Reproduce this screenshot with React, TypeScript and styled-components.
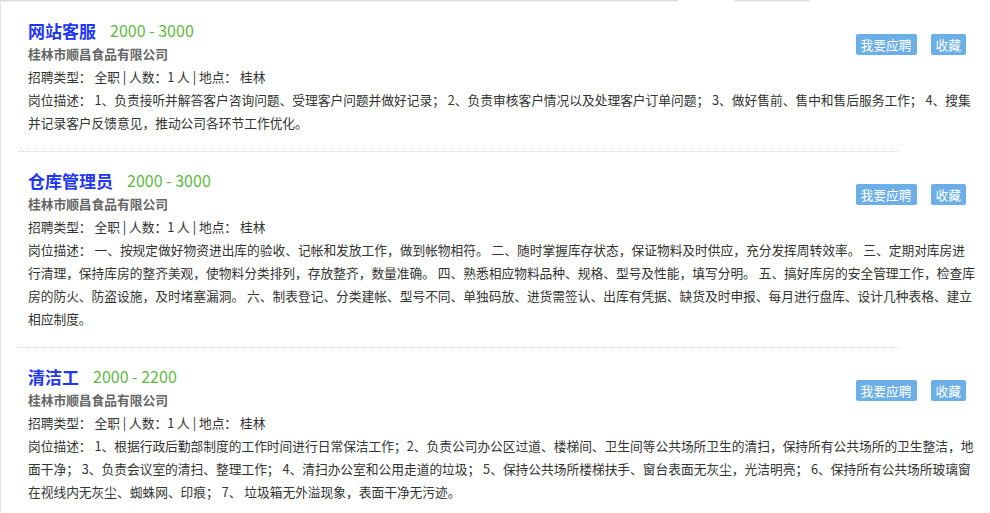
import React from "react";
import styled, { createGlobalStyle } from "styled-components";

const Global = createGlobalStyle`
  html, body { margin: 0; padding: 0; background: #fff; }
  body {
    font-family: "Microsoft YaHei", "Noto Sans CJK SC", "Noto Sans", sans-serif;
    color: #333;
  }
`;

const Page = styled.div`
  width: 990px;
  height: 513px;
  overflow: hidden;
  box-sizing: border-box;
  border-left: 1px solid #e2e2e2;
  background: #fff;
`;

const TopEdge = styled.div`
  display: flex;
  height: 2px;
  gap: 57px;
`;

const EdgeSeg = styled.div<{ $w: number }>`
  width: ${(p) => p.$w}px;
  border-top: 1px solid #dcdcdc;
  border-bottom: 1px solid #efefef;
  box-sizing: border-box;
`;

const Item = styled.div`
  padding: 16px 13px 17px 27px;
`;

const Head = styled.div`
  display: flex;
  justify-content: space-between;
  align-items: flex-start;
`;

const TitleRow = styled.div`
  display: flex;
  align-items: center;
  height: 24px;
  gap: 14px;
`;

const Title = styled.span`
  font-size: 17px;
  font-weight: bold;
  color: #1f36f5;
`;

const Salary = styled.span`
  font-size: 16px;
  color: #62b846;
`;

const Company = styled.div`
  font-size: 12.72px;
  font-weight: bold;
  line-height: 23px;
  color: #666;
`;

const Line = styled.div`
  font-size: 12.72px;
  line-height: 23px;
  color: #333;
`;

const Actions = styled.div`
  display: flex;
  gap: 14px;
  padding-top: 16px;
  margin-right: 11px;
`;

const Btn = styled.button`
  height: 21px;
  padding: 0 5px;
  border: none;
  border-radius: 2px;
  background: #6cafe6;
  color: #fff;
  font-family: inherit;
  font-size: 12.75px;
  line-height: 21px;
  cursor: pointer;
`;

const Divider = styled.div`
  margin-left: 17px;
  width: 880px;
  border-top: 1px dotted #d4d4d4;
`;

type Job = { title: string; salary: string; desc: string };

const jobs: Job[] = [
  {
    title: "网站客服",
    salary: "2000 - 3000",
    desc:
      "1、负责接听并解答客户咨询问题、受理客户问题并做好记录； 2、负责审核客户情况以及处理客户订单问题； 3、做好售前、售中和售后服务工作； 4、搜集并记录客户反馈意见，推动公司各环节工作优化。",
  },
  {
    title: "仓库管理员",
    salary: "2000 - 3000",
    desc:
      "一、按规定做好物资进出库的验收、记帐和发放工作，做到帐物相符。 二、随时掌握库存状态，保证物料及时供应，充分发挥周转效率。 三、定期对库房进行清理，保持库房的整齐美观，使物料分类排列，存放整齐，数量准确。 四、熟悉相应物料品种、规格、型号及性能，填写分明。 五、搞好库房的安全管理工作，检查库房的防火、防盗设施，及时堵塞漏洞。 六、制表登记、分类建帐、型号不同、单独码放、进货需签认、出库有凭据、缺货及时申报、每月进行盘库、设计几种表格、建立相应制度。",
  },
  {
    title: "清洁工",
    salary: "2000 - 2200",
    desc:
      "1、根据行政后勤部制度的工作时间进行日常保洁工作；2、负责公司办公区过道、楼梯间、卫生间等公共场所卫生的清扫，保持所有公共场所的卫生整洁，地面干净； 3、负责会议室的清扫、整理工作； 4、清扫办公室和公用走道的垃圾； 5、保持公共场所楼梯扶手、窗台表面无灰尘，光洁明亮； 6、保持所有公共场所玻璃窗在视线内无灰尘、蜘蛛网、印痕； 7、 垃圾箱无外溢现象，表面干净无污迹。",
  },
];

export default function App() {
  return (
    <Page>
      <Global />
      <TopEdge>
        <EdgeSeg $w={677} />
        <EdgeSeg $w={74} />
      </TopEdge>
      {jobs.map((job, i) => (
        <React.Fragment key={job.title}>
          {i > 0 && <Divider />}
          <Item>
            <Head>
              <div>
                <TitleRow>
                  <Title>{job.title}</Title>
                  <Salary>{job.salary}</Salary>
                </TitleRow>
                <Company>桂林市顺昌食品有限公司</Company>
              </div>
              <Actions>
                <Btn>我要应聘</Btn>
                <Btn>收藏</Btn>
              </Actions>
            </Head>
            <Line>招聘类型： 全职 | 人数：1 人 | 地点： 桂林</Line>
            <Line>{"岗位描述： " + job.desc}</Line>
          </Item>
        </React.Fragment>
      ))}
    </Page>
  );
}
